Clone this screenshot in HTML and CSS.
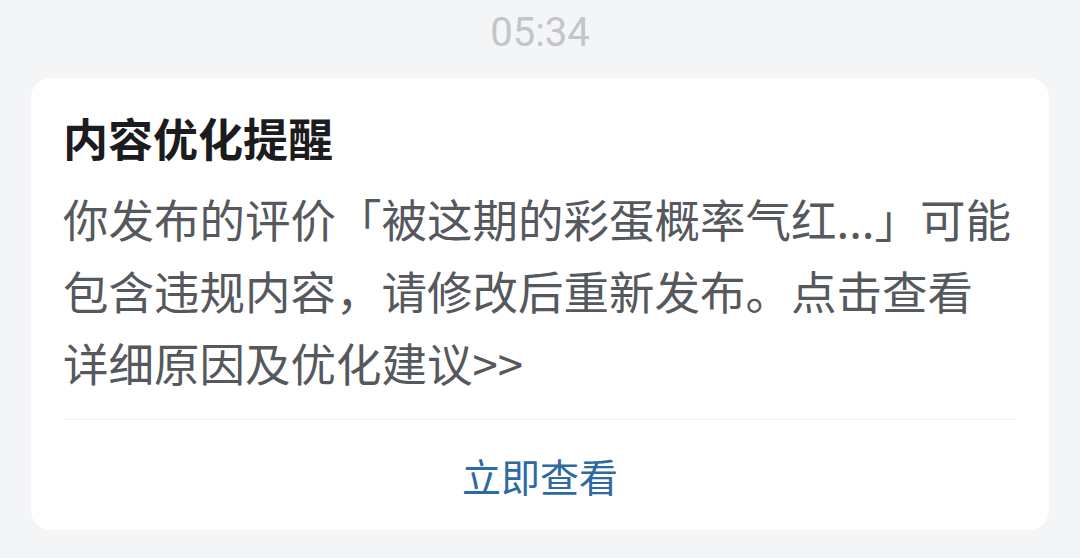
FILE: index.html
```html
<!DOCTYPE html>
<html lang="zh-CN">
<head>
  <meta charset="UTF-8">
  <meta name="viewport" content="width=device-width, initial-scale=1.0">
  <title>内容优化提醒</title>
  <link rel="stylesheet" href="styles.css">
</head>
<body>
  <div class="time">05:34</div>

  <div class="card">
    <div class="card-body">
      <h2 class="card-title">内容优化提醒</h2>
      <p class="card-text">你发布的评价「被这期的彩蛋概率气红...」可能包含违规内容，请修改后重新发布。点击查看详细原因及优化建议&gt;&gt;</p>
    </div>
    <a class="card-action" href="#">立即查看</a>
  </div>
</body>
</html>
```

FILE: styles.css
```css
body {
  margin: 0;
  background-color: #f4f5f7;
  font-family: "Noto Sans CJK SC", "Noto Sans", sans-serif;
}
.time {
  height: 66px;
  line-height: 66px;
  margin-bottom: 12px;
  text-align: center;
  font-family: Roboto, "Noto Sans", sans-serif;
  font-size: 40px;
  color: #c2c5c9;
}
.card {
  margin: 0 31px;
  background-color: #fff;
  border-radius: 20px;
}
.card-body {
  padding: 30px 34px 0 32px;
}
.card-title {
  margin: 0 0 14px;
  font-size: 45px;
  line-height: 60px;
  font-weight: 700;
  color: #1c1c1e;
}
.card-text {
  margin: 0;
  font-size: 45.5px;
  line-height: 72px;
  color: #55585c;
  padding-bottom: 21px;
  border-bottom: 1px solid #f1f2f4;
}
.card-action {
  display: block;
  height: 110px;
  line-height: 110px;
  text-align: center;
  font-size: 39px;
  color: #2d6aa1;
  text-decoration: none;
}
```
